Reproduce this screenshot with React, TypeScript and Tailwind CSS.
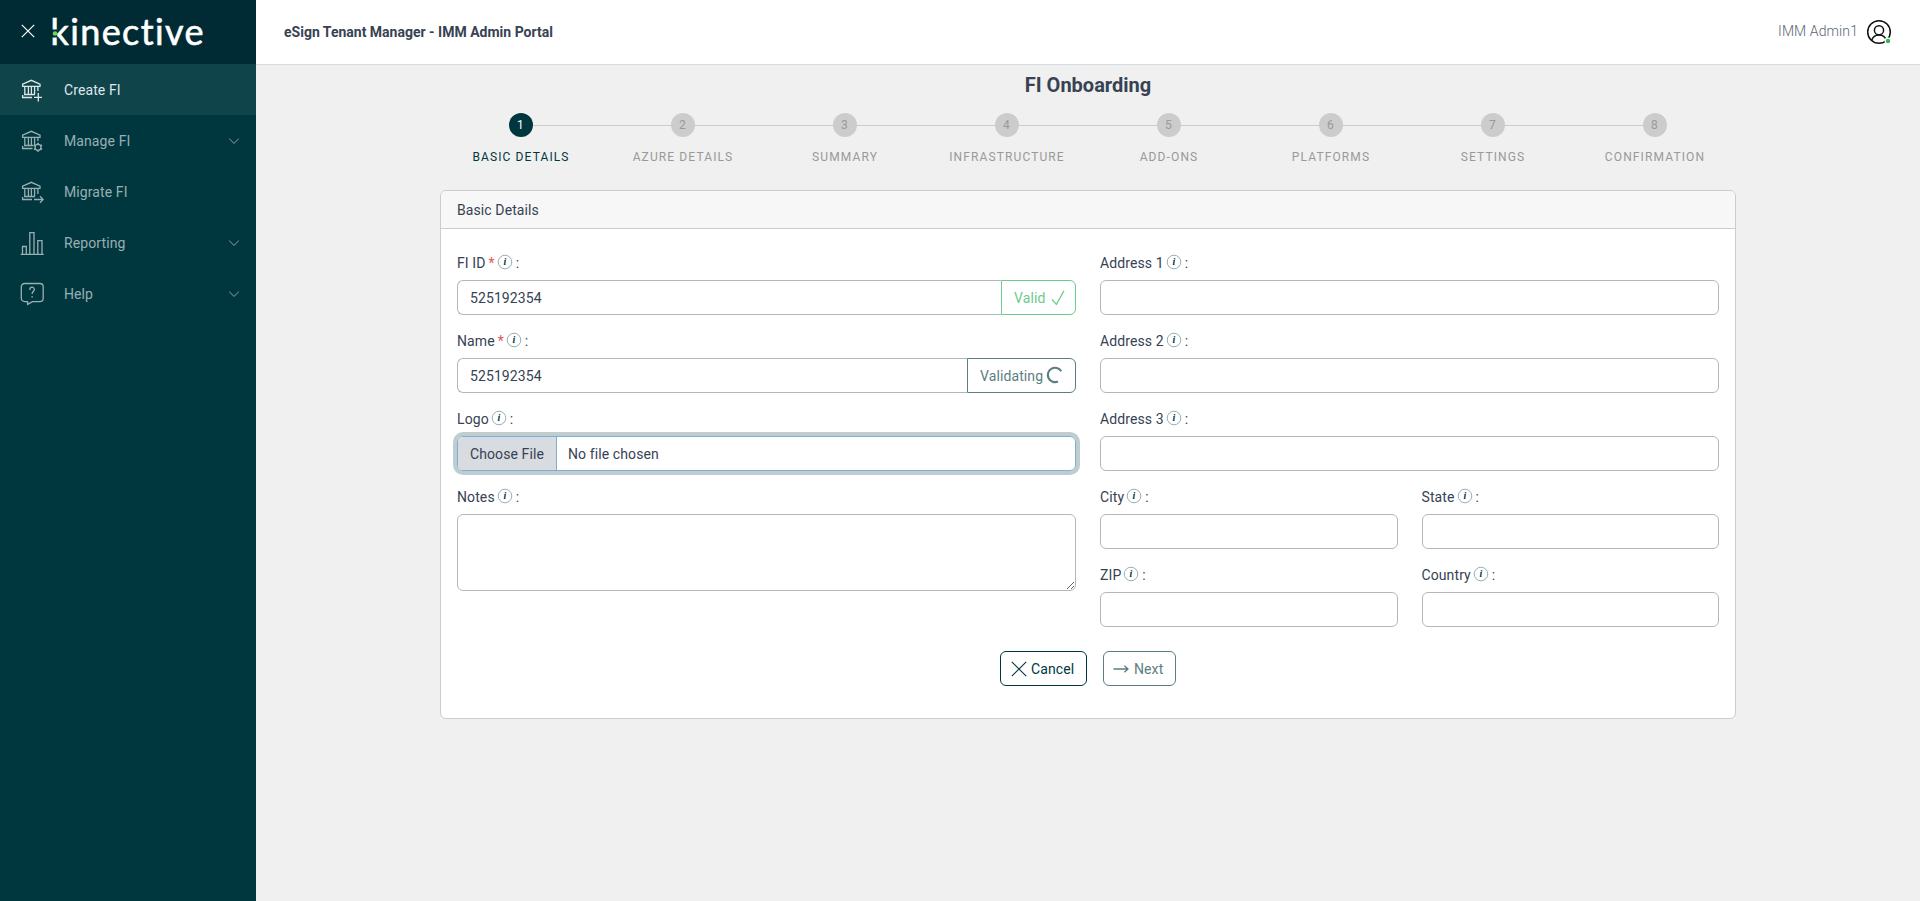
import type { ReactNode } from "react";
import clsx from "clsx";

const BANK = "M2.6 8.4V6.2L11.3 2.3L20 6.2V8.4ZM4.8 8.4V16M8.4 8.4V16M11.4 8.4V16M14.6 8.4V16";

function NavIcon({ children }: { children: ReactNode }) {
  return (
    <svg className="h-6 w-6 shrink-0" viewBox="0 0 24 24" fill="none" stroke="currentColor" strokeWidth="1.3">
      {children}
    </svg>
  );
}

const navItems = [
  {
    label: "Create FI",
    active: true,
    expandable: false,
    icon: (
      <NavIcon>
        <path d={BANK} />
        <path d="M17.9 8.4V13M4 16.5H15M2.6 19.5V17M2 19.5H12M18.3 15V23.5M14 19.3H22" />
      </NavIcon>
    ),
  },
  {
    label: "Manage FI",
    active: false,
    expandable: true,
    icon: (
      <NavIcon>
        <path d={BANK} />
        <path d="M17.9 8.4V12M4 16.5H13.5M2.6 19.5V17M2 19.5H12.5" />
        <circle cx="18" cy="18.3" r="3" />
        <path d="M18 13.8V15.3M18 21.3V22.8M14.1 16L15.4 16.8M20.6 19.8L21.9 20.6M21.9 16L20.6 16.8M15.4 19.8L14.1 20.6" strokeWidth="1.8" />
      </NavIcon>
    ),
  },
  {
    label: "Migrate FI",
    active: false,
    expandable: false,
    icon: (
      <NavIcon>
        <path d={BANK} />
        <path d="M17.9 8.4V14M4 16.5H15M2.6 19.5V17M2 19.5H12M14 19.5H23M20 16.3L23.2 19.5L20 22.7" />
      </NavIcon>
    ),
  },
  {
    label: "Reporting",
    active: false,
    expandable: true,
    icon: (
      <NavIcon>
        <path d="M.7 23.4H23.7M2.5 23.4V15.5H6.3V23.4M9.8 23.4V1.7H14V23.4M17.8 23.4V9.7H22V23.4" />
      </NavIcon>
    ),
  },
  {
    label: "Help",
    active: false,
    expandable: true,
    icon: (
      <NavIcon>
        <path d="M4.6 1.5H19.9A3.3 3.3 0 0 1 23.2 4.8V16.3A3.3 3.3 0 0 1 19.9 19.6H12.5L7.6 22.4V19.6H4.6A3.3 3.3 0 0 1 1.3 16.3V4.8A3.3 3.3 0 0 1 4.6 1.5Z" />
        <path d="M9.9 8V7.4A2.2 2.2 0 0 1 14.3 7.4C14.3 9.4 12.1 9.2 12.1 12.1M12.1 13.9V15.4" />
      </NavIcon>
    ),
  },
];

const steps = [
  "Basic Details",
  "Azure Details",
  "Summary",
  "Infrastructure",
  "Add-Ons",
  "Platforms",
  "Settings",
  "Confirmation",
];

function Logo() {
  return (
    <svg className="ml-[13px] h-16 w-[168px]" viewBox="0 0 168 64" aria-label="kinective">
      <text
        x="2.5"
        y="45"
        textLength="153"
        lengthAdjust="spacing"
        fill="#fff"
        stroke="#fff"
        strokeWidth=".6"
        className="font-['Lato',sans-serif] text-[36px] [font-variant-ligatures:none]"
      >
        kinective
      </text>
      {/* gap in the stem of the k, filled by the green dot */}
      <rect x="4" y="29.5" width="5.2" height="8" fill="#002b34" />
      <circle cx="7" cy="33.5" r="2.3" fill="#6cd94f" />
    </svg>
  );
}

function Sidebar() {
  return (
    <aside className="w-64 shrink-0 bg-[#00373f]">
      <div className="flex h-16 items-center bg-[#002b34] pl-[21px]">
        <svg className="mt-[-2px] h-[14px] w-[14px]" viewBox="0 0 14 14" fill="none" stroke="#fff" strokeWidth="1.2">
          <path d="M.8 .8L13.2 13.2M13.2 .8L.8 13.2" />
        </svg>
        <Logo />
      </div>
      <nav>
        {navItems.map((item) => (
          <a
            key={item.label}
            className={clsx(
              "flex h-[51px] items-center pr-4 pl-5",
              item.active ? "bg-[#0f444b] text-[#dfe6e7]" : "text-[#99afb2]",
            )}
          >
            {item.icon}
            <span className="ml-5 flex-1">{item.label}</span>
            {item.expandable && (
              <svg className="h-3 w-3" viewBox="0 0 12 12" fill="none" stroke="currentColor" strokeWidth=".9">
                <path d="M1.2 3.7L6 8.4L10.8 3.7" />
              </svg>
            )}
          </a>
        ))}
      </nav>
    </aside>
  );
}

function Header() {
  return (
    <header className="flex h-[65px] items-center justify-between border-b border-[#d8dbe0] bg-white px-7">
      <h1 className="font-bold tracking-normal">eSign Tenant Manager - IMM Admin Portal</h1>
      <div className="flex items-center gap-2">
        <span className="mt-[-2px] font-light text-[#5a6675]">IMM Admin1</span>
        <svg className="h-[26px] w-[26px]" viewBox="0 0 26 26" fill="none" stroke="#111" strokeWidth="1.5">
          <circle cx="13" cy="13" r="11.3" />
          <circle cx="13" cy="11.3" r="4.6" />
          <path d="M5.6 21.5C6.7 17.8 9.5 15.9 13 15.9S19.3 17.8 20.4 21.5" />
          <circle cx="22" cy="22" r="2.8" fill="#2eb85c" stroke="#fff" strokeWidth="1.2" />
        </svg>
      </div>
    </header>
  );
}

function Stepper() {
  return (
    <ol className="mt-4 grid grid-cols-8">
      {steps.map((step, i) => (
        <li key={step} className="flex flex-col items-center">
          <div className="flex w-full items-center">
            <span className={clsx("mt-px h-px flex-1", i > 0 && "bg-[#ccc]")} />
            <span
              className={clsx(
                "flex h-6 w-6 items-center justify-center rounded-full pr-px text-xs",
                i === 0 ? "bg-[#00373f] text-white" : "bg-[#ccc] text-[#999]",
              )}
            >
              {i + 1}
            </span>
            <span className={clsx("mt-px h-px flex-1", i < steps.length - 1 && "bg-[#ccc]")} />
          </div>
          <span
            className={clsx(
              "mt-3 text-xs tracking-[1.12px] uppercase",
              i === 0 ? "text-[#00373f]" : "text-[#999]",
            )}
          >
            {step}
          </span>
        </li>
      ))}
    </ol>
  );
}

interface FieldProps {
  label: string;
  required?: boolean;
  children?: ReactNode;
}

function Field({ label, required, children }: FieldProps) {
  return (
    <div>
      <div className="mb-[7px] flex h-5 items-center">
        <span>{label}</span>
        {required && <span className="ml-[3px] text-[#e55353]">*</span>}
        <svg className="mt-[-3px] ml-[2px] h-4 w-4" viewBox="0 0 16 16">
          <circle cx="8" cy="8" r="6.8" fill="#fff" stroke="#7f9b9f" strokeWidth=".8" />
          <text
            x="8"
            y="11.2"
            textAnchor="middle"
            fill="#00373f"
            className="font-['Liberation_Serif',serif] text-[10px] font-bold tracking-normal italic"
          >
            i
          </text>
        </svg>
        <span className="ml-[3px]">:</span>
      </div>
      {children ?? <input className="block h-[35px] w-full rounded-md border border-[#b1b7c1] px-3" />}
    </div>
  );
}

export default function App() {
  return (
    <div className="flex h-[901px] bg-[#f0f0f0] font-['Roboto',sans-serif] text-sm tracking-[.1px] text-[#374253]">
      <Sidebar />
      <div className="flex-1">
        <Header />
        <main className="mx-auto w-[1296px]">
          <h2 className="pt-2 text-center text-xl leading-6 font-bold tracking-normal">FI Onboarding</h2>
          <Stepper />
          <section className="mt-[25px] h-[529px] overflow-hidden rounded-md border border-[#ccc] bg-white">
            <div className="flex h-[38px] items-center border-b border-[#ccc] bg-[#f7f7f7] px-4">Basic Details</div>
            <div className="grid grid-cols-2 gap-x-6 px-4 pt-6">
              <div className="flex flex-col gap-4">
                <Field label="FI ID" required>
                  <div className="flex h-[35px]">
                    <input
                      className="min-w-0 flex-1 rounded-l-md border border-r-0 border-[#b1b7c1] px-3"
                      defaultValue="525192354"
                    />
                    <div className="flex w-[75px] items-center rounded-r-md border border-[#6fca8f] pl-3 text-[#6fca8f]">
                      Valid
                      <svg className="ml-[5px] h-4 w-4" viewBox="0 0 16 16" fill="none" stroke="currentColor" strokeWidth="1.3">
                        <path d="M2 9.5L6.4 14.4L14 .8" />
                      </svg>
                    </div>
                  </div>
                </Field>
                <Field label="Name" required>
                  <div className="flex h-[35px]">
                    <input
                      className="min-w-0 flex-1 rounded-l-md border border-r-0 border-[#b1b7c1] px-3"
                      defaultValue="525192354"
                    />
                    <div className="flex w-[109px] items-center rounded-r-md border border-[#5b7e83] pl-3 text-[#5b7e83]">
                      Validating
                      <svg className="mt-[-2px] ml-[2px] h-[18px] w-[18px]" viewBox="0 0 18 18" fill="none" stroke="currentColor" strokeWidth="2.1">
                        <path d="M16.2 5.2A7.2 7.2 0 1 0 13 15.5" />
                      </svg>
                    </div>
                  </div>
                </Field>
                <Field label="Logo">
                  <div className="flex h-[35px] overflow-hidden rounded-md border border-[#80add8] ring-4 ring-[#bfcdcf]">
                    <span className="flex w-[99px] items-center border-r border-[#80add8] bg-[#d8dbe0] pl-3">
                      Choose File
                    </span>
                    <span className="flex items-center pl-[11px]">No file chosen</span>
                  </div>
                </Field>
                <Field label="Notes">
                  <textarea className="block h-[77px] w-full rounded-md border border-[#b1b7c1]" />
                </Field>
              </div>
              <div className="flex flex-col gap-4">
                <Field label="Address 1" />
                <Field label="Address 2" />
                <Field label="Address 3" />
                <div className="grid grid-cols-2 gap-x-6 gap-y-4">
                  <Field label="City" />
                  <Field label="State" />
                  <Field label="ZIP" />
                  <Field label="Country" />
                </div>
              </div>
            </div>
            <div className="mt-6 flex justify-center gap-4">
              <button className="flex h-[35px] w-[87px] items-center rounded-md border border-[#00373f] pl-[10px] text-[#00373f]">
                <svg className="h-4 w-4" viewBox="0 0 16 16" fill="none" stroke="currentColor" strokeWidth="1.1">
                  <path d="M.8 .8L15.2 15.2M15.2 .8L.8 15.2" />
                </svg>
                <span className="ml-1">Cancel</span>
              </button>
              <button className="flex h-[35px] w-[73px] items-center rounded-md border border-[#5b7e83] pl-[9px] text-[#5b7e83]">
                <svg className="h-4 w-4" viewBox="0 0 16 16" fill="none" stroke="currentColor" strokeWidth="1.3">
                  <path d="M.5 8H15M11.4 4.8L15 8L11.4 11.2" />
                </svg>
                <span className="ml-[5px]">Next</span>
              </button>
            </div>
          </section>
        </main>
      </div>
    </div>
  );
}
